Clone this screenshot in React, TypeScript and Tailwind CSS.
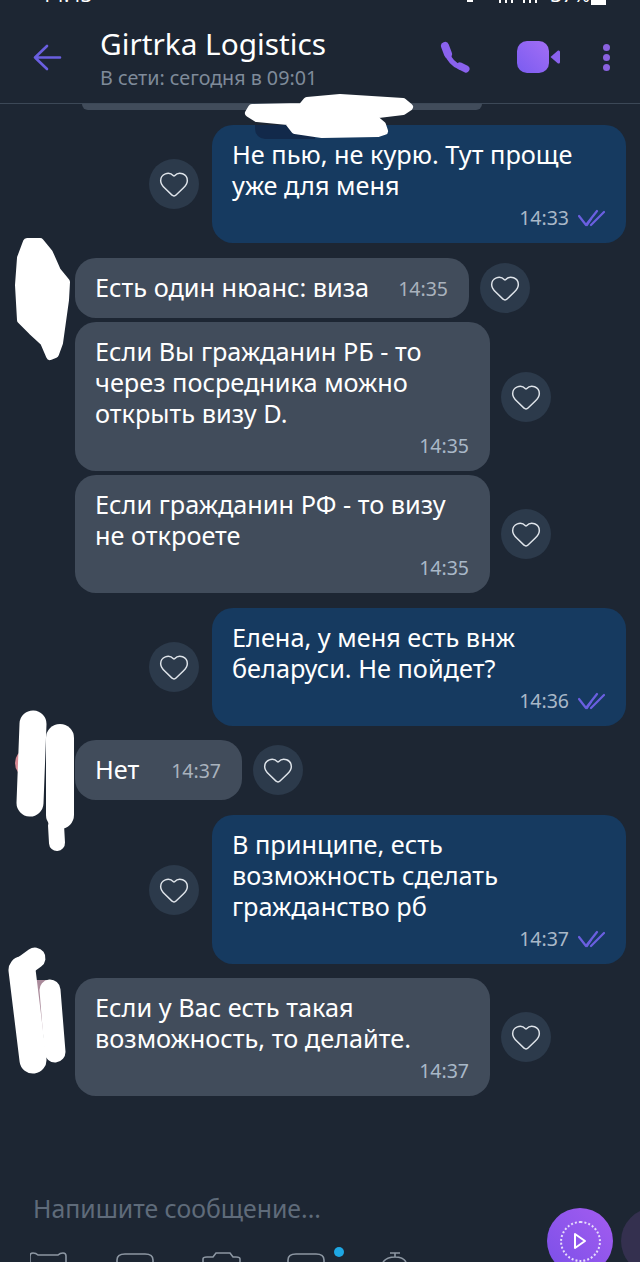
import React from 'react'
import { Heart } from 'lucide-react'

type Msg = {
  out?: boolean
  lines: string[]
  time: string
  inline?: string
  gap: string
  height: string
}

const messages: Msg[] = [
  { out: true, lines: ['Не пью, не курю. Тут проще', 'уже для меня'], time: '14:33', gap: 'mt-[15px]', height: 'h-[118px]' },
  { lines: ['Есть один нюанс: виза'], time: '14:35', inline: 'w-[394px]', gap: 'mt-[15px]', height: 'h-[60px]' },
  { lines: ['Если Вы гражданин РБ - то', 'через посредника можно', 'открыть визу D.'], time: '14:35', gap: 'mt-[4px]', height: 'h-[149px]' },
  { lines: ['Если гражданин РФ - то визу', 'не откроете'], time: '14:35', gap: 'mt-[4px]', height: 'h-[118px]' },
  { out: true, lines: ['Елена, у меня есть внж', 'беларуси. Не пойдет?'], time: '14:36', gap: 'mt-[15px]', height: 'h-[118px]' },
  { lines: ['Нет'], time: '14:37', inline: 'w-[167px]', gap: 'mt-[14px]', height: 'h-[60px]' },
  { out: true, lines: ['В принципе, есть', 'возможность сделать', 'гражданство рб'], time: '14:37', gap: 'mt-[15px]', height: 'h-[149px]' },
  { lines: ['Если у Вас есть такая', 'возможность, то делайте.'], time: '14:37', gap: 'mt-[14px]', height: 'h-[118px]' },
]

function HeartButton() {
  return (
    <div className="flex h-[50px] w-[50px] shrink-0 items-center justify-center rounded-full bg-[#2c3a4b]">
      <Heart size={32} strokeWidth={1.1} className="text-[#dfe4ea]" />
    </div>
  )
}

function Bubble({ m }: { m: Msg }) {
  if (m.inline) {
    return (
      <div className={`flex h-full items-center rounded-[21px] bg-[#414c5b] pl-[20px] pr-[21px] ${m.inline}`}>
        <span className="text-[25.3px] text-white">{m.lines[0]}</span>
        <span className="ml-auto pt-[2px] text-[19.5px] text-[#a9b2bd]">{m.time}</span>
      </div>
    )
  }
  const bg = m.out ? 'bg-[#163a60] w-[414px]' : 'bg-[#414c5b] w-[415px]'
  return (
    <div className={`flex h-full flex-col rounded-[21px] pl-[20px] pr-[21px] pt-[14px] ${bg}`}>
      {m.lines.map((l) => (
        <div key={l} className="h-[31px] text-[25.3px] leading-[31px] text-white">{l}</div>
      ))}
      <div className="mt-auto mb-[13px] flex items-center justify-end gap-[9px]">
        <span className="text-[19.5px] leading-[24px] text-[#a9b8c8]">{m.time}</span>
        {m.out && (
          <svg width="27" height="18" viewBox="0 0 27 18" fill="none" stroke="#6a5fe0" strokeWidth="2.2" strokeLinecap="round" strokeLinejoin="round">
            <path d="M1 7 L8 16 L19 2" />
            <path d="M9 16 L13 10 M13 16 L26 3" />
          </svg>
        )}
      </div>
    </div>
  )
}

function Row({ m }: { m: Msg }) {
  if (m.out) {
    return (
      <div className={`flex items-center justify-end gap-[13px] pr-[14px] ${m.gap} ${m.height}`}>
        <HeartButton />
        <Bubble m={m} />
      </div>
    )
  }
  return (
    <div className={`flex items-center gap-[11px] pl-[75px] ${m.gap} ${m.height}`}>
      <Bubble m={m} />
      <HeartButton />
    </div>
  )
}

export default function App() {
  return (
    <div
      className="relative flex h-[1262px] w-[640px] flex-col overflow-hidden bg-[#1d2633]"
      style={{ fontFamily: '"Noto Sans", sans-serif' }}
    >
      {/* status bar, cut off by the top of the photo */}
      <div className="flex h-[5px] shrink-0 items-end overflow-hidden pl-[41px] pr-[34px] text-[20px] leading-[20px] text-white">
        <span>14:43</span>
        <svg className="ml-auto" width="80" height="5" viewBox="0 0 80 5" fill="#fff">
          <rect x="0" y="0" width="6" height="2" />
          <rect x="32" y="0" width="2" height="3" />
          <rect x="38" y="0" width="2" height="3" />
          <rect x="44" y="0" width="2" height="3" />
          <rect x="56" y="0" width="2" height="3" />
          <rect x="62" y="0" width="2" height="3" />
          <rect x="68" y="0" width="2" height="3" />
        </svg>
        <span className="ml-[4px]">37%</span>
        <div className="ml-[1px] h-[5px] w-[15px] bg-white" />
      </div>

      <header className="flex h-[99px] shrink-0 items-center border-b border-[#3c4857] pl-[33px] pr-[30px] pt-[6px]">
        <svg width="29" height="27" viewBox="0 0 29 27" fill="none" stroke="#6a5fe0" strokeWidth="2.6" strokeLinecap="round" strokeLinejoin="round">
          <path d="M27 13.5 H2 M14 2 L2 13.5 L14 25" />
        </svg>
        <div className="ml-[38px] flex flex-col">
          <div className="text-[29.8px] leading-[40px] text-white">Girtrka Logistics</div>
          <div className="text-[19.7px] leading-[27px] text-[#7f8b9a]">В сети: сегодня в 09:01</div>
        </div>
        <svg className="ml-auto" width="32" height="32" viewBox="0 0 32 32" fill="none" stroke="#8a62ee" strokeLinecap="round">
          <path d="M6 5 L9 13" strokeWidth="8" />
          <path d="M8 12 C10 18 15 24 21 26" strokeWidth="5.5" />
          <path d="M21 25 L27 28" strokeWidth="7" />
        </svg>
        <svg className="ml-[46px]" width="44" height="32" viewBox="0 0 44 32">
          <defs>
            <linearGradient id="vid" x1="0" y1="1" x2="1" y2="0">
              <stop offset="0" stopColor="#7a5cf0" />
              <stop offset="1" stopColor="#a36ef5" />
            </linearGradient>
          </defs>
          <rect x="0" y="0" width="32" height="32" rx="10" fill="url(#vid)" />
          <path d="M33.5 16 L41 9.5 Q43 9 43 11 V21 Q43 23 41 22.5 Z" fill="#8a62ee" />
        </svg>
        <div className="ml-[42px] flex flex-col gap-[3px]">
          <div className="h-[7px] w-[7px] rounded-full bg-[#8a62e0]" />
          <div className="h-[7px] w-[7px] rounded-full bg-[#8a62e0]" />
          <div className="h-[7px] w-[7px] rounded-full bg-[#8a62e0]" />
        </div>
      </header>

      {/* previous message peeking out under the header */}
      <div className="ml-[82px] h-[6px] w-[400px] shrink-0 rounded-b-[14px] bg-[#414c5b]" />

      <main className="flex flex-col">
        <div className="relative">
          <div className="absolute left-[255px] top-[15px] z-10 h-[14px] w-[60px] rounded-bl-[10px] bg-[#12294a]" />
        </div>
        {messages.map((m, i) => (
          <Row key={i} m={m} />
        ))}
      </main>

      <footer className="mt-auto flex h-[166px] shrink-0 items-start pl-[33px]">
        <div className="mt-[96px] text-[24.8px] leading-[32px] text-[#5f6b7a]">Напишите сообщение...</div>
      </footer>

      {/* composer toolbar icons and round buttons, cut by the bottom edge */}
      <div className="absolute bottom-0 left-0 flex h-[10px] w-full items-start overflow-hidden pl-[30px]">
        <svg width="380" height="10" viewBox="0 0 380 10" fill="none" stroke="#8d97a3" strokeWidth="1.6">
          <path d="M0 10 V4 Q0 1 3 1 Q6 1 8 3 H28 Q30 1 33 1 Q36 1 36 4 V10" />
          <path d="M87 10 V8 Q87 2 95 2 H115 Q123 2 123 8 V10" />
          <path d="M173 10 V7 Q173 5 177 5 H183 L186 1 H200 L203 5 H206 Q210 5 210 7 V10" />
          <path d="M258 10 V8 Q258 2 266 2 H286 Q294 2 294 8 V10" />
          <path d="M360 1 H370 M365 1 V5 M353 10 Q357 5 365 5 Q373 5 376 10" />
        </svg>
      </div>
      <div className="absolute left-[334px] top-[1247px] h-[10px] w-[10px] rounded-full bg-[#1ea7e4]" />
      <div className="absolute left-[547px] top-[1208px] flex h-[66px] w-[66px] items-center justify-center rounded-full bg-gradient-to-tr from-[#7a4fe8] to-[#a45cf0]">
        <div className="flex h-[41px] w-[41px] items-center justify-center rounded-full border-2 border-dotted border-[#e6dcfb]">
          <svg width="14" height="18" viewBox="0 0 14 18" fill="none" stroke="#fff" strokeWidth="2" strokeLinejoin="round">
            <path d="M2 2 L12 9 L2 16 Z" />
          </svg>
        </div>
      </div>
      <div className="absolute left-[621px] top-[1208px] h-[66px] w-[66px] rounded-full bg-[#34304f]" />

      {/* white scribbles painted over the avatars and a reply preview */}
      <svg className="pointer-events-none absolute left-0 top-0 z-20" width="640" height="1262" viewBox="0 0 640 1262" fill="#fff">
        <ellipse cx="24" cy="763" rx="9" ry="12" fill="#d98a94" />
        <path d="M36 980 H50 V1030 H36 Z" fill="#a98a9a" />
        <g stroke="#fff" strokeWidth="8" strokeLinejoin="round">
          <path d="M252 108 L302 107 L307 101 L340 98 L403 102 L409 107 L403 111 L370 115 L382 125 L384 131 L378 133 L322 134 L295 130 L288 121 L257 118 L249 113 Z" />
          <path d="M27 242 L40 242 L49 253 L57 271 L66 282 L65 300 L59 343 L55 354 L50 356 L44 342 L32 331 L21 320 L19 285 L21 258 Z" />
        </g>
        <g stroke="#fff" strokeLinecap="round" fill="none">
          <path d="M33 724 L30 803" strokeWidth="27" />
          <path d="M60 738 L60 815" strokeWidth="28" />
          <path d="M56 825 L57 843" strokeWidth="16" />
          <path d="M22 970 L33 1060" strokeWidth="27" />
          <path d="M35 958 L24 966" strokeWidth="21" />
          <path d="M50 990 L55 1052" strokeWidth="21" />
        </g>
      </svg>
    </div>
  )
}
